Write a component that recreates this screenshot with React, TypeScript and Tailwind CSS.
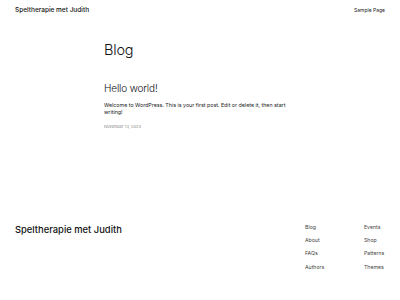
export default function App() {
  const font = { fontFamily: "Inter, 'Noto Sans', sans-serif" };
  return (
    <div className="w-[400px] h-[300px] bg-white text-[#111111] overflow-hidden" style={font}>
      <header className="flex items-center justify-between px-[15px] h-[20px]">
        <div className="text-[6.5px] leading-[8px] font-medium">Speltherapie met Judith</div>
        <div className="text-[5px] leading-[6px] text-[#222]">Sample Page</div>
      </header>
      <main className="w-[192px] mx-auto">
        <h1 className="mt-[22px] text-[14.5px] leading-[16px] font-light tracking-[-0.2px]">Blog</h1>
        <h2 className="mt-[24.6px] text-[10px] leading-[11px] font-light tracking-[-0.15px]">Hello world!</h2>
        <p className="mt-[8px] text-[5.3px] leading-[7px] text-[#222]">
          Welcome to WordPress. This is your first post. Edit or delete it, then start writing!
        </p>
        <p className="mt-[8.3px] text-[4px] leading-[5px] text-[#888]">November 13, 2024</p>
      </main>
      <footer className="flex justify-between pl-[15px] mt-[94.8px]">
        <div className="mt-[1.7px] text-[9.4px] font-medium leading-[10px]">Speltherapie met Judith</div>
        <div className="grid grid-cols-[59px_auto] gap-y-[6.8px] w-[95px] text-[5.2px] leading-[6.5px] text-[#444]">
          <span>Blog</span><span>Events</span>
          <span>About</span><span>Shop</span>
          <span>FAQs</span><span>Patterns</span>
          <span>Authors</span><span>Themes</span>
        </div>
      </footer>
    </div>
  );
}
